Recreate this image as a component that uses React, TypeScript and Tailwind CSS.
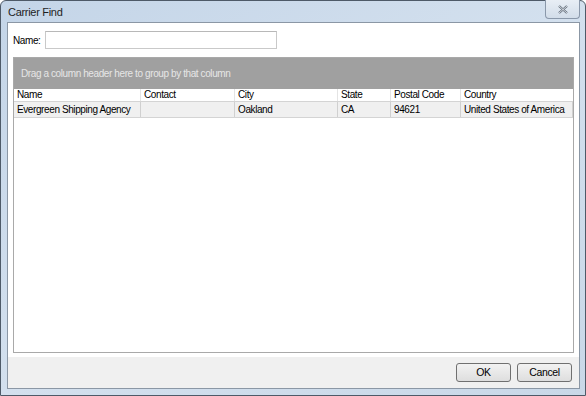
import React from 'react';

const columns = [
  { key: 'name', label: 'Name', width: 'w-[127px]' },
  { key: 'contact', label: 'Contact', width: 'w-[94px]' },
  { key: 'city', label: 'City', width: 'w-[103px]' },
  { key: 'state', label: 'State', width: 'w-[53px]' },
  { key: 'postal', label: 'Postal Code', width: 'w-[70px]' },
  { key: 'country', label: 'Country', width: 'flex-1' },
];

const row: Record<string, string> = {
  name: 'Evergreen Shipping Agency',
  contact: '',
  city: 'Oakland',
  state: 'CA',
  postal: '94621',
  country: 'United States of America',
};

const App: React.FC = () => {
  return (
    <div className="w-[586px] h-[396px] bg-white font-['Liberation_Sans',Arial,sans-serif] text-[10px] tracking-[-0.4px] text-black">
      {/* Window frame */}
      <div className="w-full h-full flex flex-col rounded-t-[6px] border border-[#4e5a68] bg-gradient-to-br from-[#c4d5e8] via-[#d3e0ee] to-[#c9d8e8] pl-[6px] pr-[5px] pb-[6px]">
        {/* Title bar */}
        <div className="h-[21px] flex items-center justify-between">
          <span className="text-[11px] text-[#1e1e1e] pl-[1px] pt-[1px] tracking-[-0.3px]">Carrier Find</span>
          <div className="self-start h-[19px] w-[35px] -mt-[1px] rounded-b-[4px] border border-t-0 border-[#8a98aa] bg-gradient-to-b from-[#e8eef5] to-[#d2dde9] flex items-center justify-center">
            <svg width="10" height="9" viewBox="0 0 10 9">
              <path d="M1 1 L9 8 M9 1 L1 8" stroke="#5e6a78" strokeWidth="2.2" />
              <path d="M1 1 L9 8 M9 1 L1 8" stroke="#f2f4f7" strokeWidth="0.8" />
            </svg>
          </div>
        </div>

        {/* Client area */}
        <div className="flex-1 flex flex-col border border-[#8b97a5] bg-white">
          <div className="flex items-center h-[34px] pl-[5px]">
            <span className="mr-[5px] whitespace-nowrap">Name:</span>
            <div className="w-[232px] h-[18px] border border-[#c9c9c9] border-t-[#b8b8b8] bg-white" />
          </div>

          <div className="px-[5px] flex-1 pb-[4px] flex">
            <div className="flex-1 flex flex-col border border-[#a9a9a9]">
              <div className="h-[31px] bg-[#a0a0a0] flex items-center pl-[7px] text-[#e6e6e6] whitespace-nowrap">
                Drag a column header here to group by that column
              </div>
              <div className="flex h-[12px] items-center leading-[12px]">
                {columns.map((c, i) => (
                  <div key={c.key} className={`${c.width} h-full pl-[3px] whitespace-nowrap overflow-hidden ${i < columns.length - 1 ? 'border-r border-[#e4e4e4]' : ''}`}>
                    {c.label}
                  </div>
                ))}
              </div>
              <div className="flex h-[17px] items-center border-y border-[#d4d4d4] bg-[#f0f0f0]">
                {columns.map((c) => (
                  <div key={c.key} className={`${c.width} h-full flex items-center pl-[3px] whitespace-nowrap overflow-hidden border-r border-[#d0d0d0]`}>
                    {row[c.key]}
                  </div>
                ))}
              </div>
              <div className="flex-1 bg-white" />
            </div>
          </div>

          <div className="h-[31px] bg-[#f0f0f0] flex items-center justify-end gap-[6px] pr-[7px]">
            <button className="w-[55px] h-[19px] rounded-[3px] border border-[#707070] bg-gradient-to-b from-[#f2f2f2] to-[#dedede] text-[10.5px]">OK</button>
            <button className="w-[55px] h-[19px] rounded-[3px] border border-[#707070] bg-gradient-to-b from-[#f2f2f2] to-[#dedede] text-[10.5px]">Cancel</button>
          </div>
        </div>
      </div>
    </div>
  );
};

export default App;
